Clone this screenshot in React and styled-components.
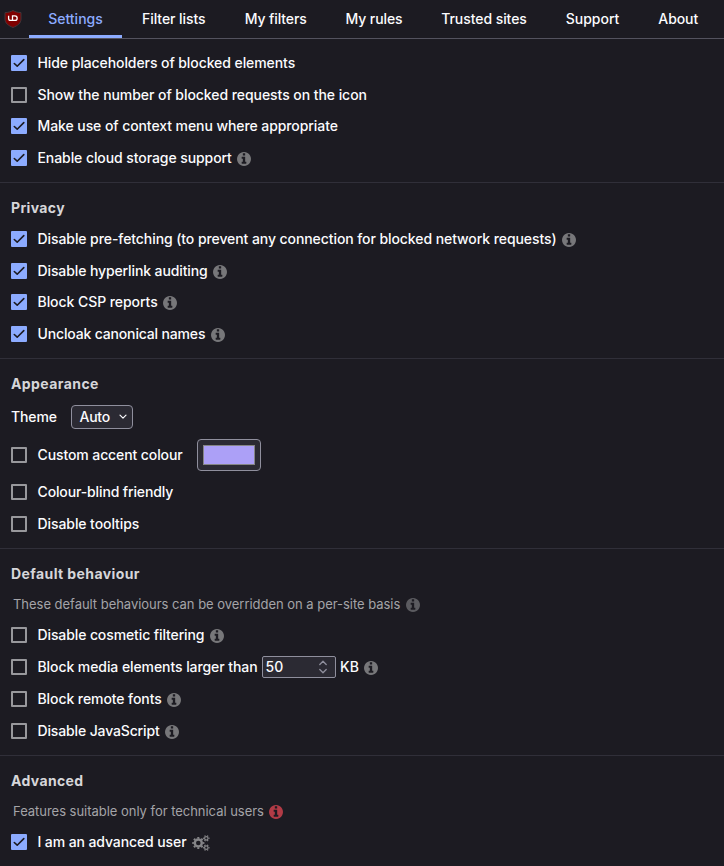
import React from "react";
import styled, { createGlobalStyle } from "styled-components";

const GlobalStyle = createGlobalStyle`
  * { box-sizing: border-box; }
  body {
    margin: 0;
    background: #1c1b22;
    color: #fbfbfe;
    font: 500 14px/20px Inter, "Liberation Sans", sans-serif;
    overflow: hidden;
  }
`;

const Page = styled.div`
  height: 866px;
  overflow: hidden;
`;

const Nav = styled.nav`
  display: flex;
  height: 39px;
  border-bottom: 1px solid #53525e;
`;

const Logo = styled.svg`
  width: 18px;
  height: 18px;
  margin: 10px 7px 0 4px;
  flex: none;
`;

const Tab = styled.a`
  width: ${(p) => p.$width}px;
  flex: none;
  text-align: center;
  line-height: 38px;
  height: 38px;
  letter-spacing: ${(p) => p.$spacing || 0}px;
  white-space: nowrap;
  color: ${(p) => (p.$active ? "#8cabff" : "#fbfbfe")};
  border-bottom: 3px solid ${(p) => (p.$active ? "#8cabff" : "transparent")};
`;

const Section = styled.section`
  padding: ${(p) => p.$top}px 11px 8.16px;
  border-bottom: 1px solid #302f39;
  &:last-child { border-bottom: 0; }
`;

const Heading = styled.h3`
  margin: 0;
  height: ${(p) => p.$height}px;
  font-size: 14px;
  font-weight: 700;
  line-height: 31px;
  letter-spacing: ${(p) => p.$spacing || 0.35}px;
  color: #d6d6d9;
`;

const Description = styled.p`
  display: flex;
  align-items: center;
  margin: 0;
  padding-left: 2px;
  height: ${(p) => p.$height}px;
  font-size: 13px;
  font-weight: 400;
  letter-spacing: -0.03px;
  color: #a4a4a8;
`;

const Row = styled.div`
  display: flex;
  align-items: center;
  height: ${(p) => p.$height || 31.67}px;
  white-space: nowrap;
`;

const Box = styled.span`
  display: flex;
  flex: none;
  width: 16px;
  height: 16px;
  margin-right: 10.5px;
  border-radius: 1px;
  border: ${(p) => (p.$checked ? "0" : "2px solid #98989c")};
  background: ${(p) => (p.$checked ? "#8cabff" : "transparent")};
`;

const Text = styled.span`
  letter-spacing: ${(p) => p.$spacing || 0}px;
`;

const InfoSvg = styled.svg`
  flex: none;
  width: 14px;
  height: 14px;
  margin: 2px 0 0 5.5px;
  fill: ${(p) => p.$tone || "#77777a"};
`;

const GearsSvg = styled.svg`
  flex: none;
  width: 18px;
  height: 16px;
  margin: 2px 0 0 5px;
  fill: none;
  stroke: #858588;
`;

const Select = styled.div`
  display: flex;
  align-items: center;
  justify-content: space-between;
  width: 62px;
  height: 24px;
  margin-left: 14.5px;
  padding: 0 5px 0 7px;
  letter-spacing: -0.25px;
  background: #2b2a33;
  border: 1px solid #8f8f9d;
  border-radius: 4px;
`;

const ColorWell = styled.div`
  width: 64px;
  height: 32px;
  margin-left: 14px;
  padding: 5px;
  background: #2b2a33;
  border: 1px solid #8f8f9d;
  border-radius: 4px;
`;

const Swatch = styled.div`
  height: 20px;
  background: #aca0f7;
  border: 1px solid #858585;
`;

const NumberField = styled.div`
  display: flex;
  align-items: center;
  justify-content: space-between;
  width: 74px;
  height: 22px;
  margin: 0 4.5px 0 4px;
  padding: 0 8px 0 3px;
  background: #2b2a33;
  border: 1px solid #8f8f9d;
  border-radius: 2px;
`;

function Info({ tone }) {
  return (
    <InfoSvg $tone={tone} viewBox="128 128 1536 1536">
      <path d="M1152 1376v-160q0-14-9-23t-23-9h-96V672q0-14-9-23t-23-9H672q-14 0-23 9t-9 23v160q0 14 9 23t23 9h96v320h-96q-14 0-23 9t-9 23v160q0 14 9 23t23 9h448q14 0 23-9t9-23zM1024 480V288q0-14-9-23t-23-9H800q-14 0-23 9t-9 23v192q0 14 9 23t23 9h192q14 0 23-9t9-23zM1664 896q0 209-103 385.500t-279.500 279.500-385.500 103-385.500-103-279.500-279.500-103-385.500 103-385.500 279.500-279.500 385.500-103 385.500 103 279.500 279.500 103 385.500z" />
    </InfoSvg>
  );
}

function Gears() {
  return (
    <GearsSvg viewBox="0 0 18 16">
      <circle cx="6.3" cy="8" r="3.5" strokeWidth="2.4" />
      <circle cx="6.3" cy="8" r="5.2" strokeWidth="1.800" pathLength="16" strokeDasharray="1 1" strokeDashoffset="0.5" />
      {[3.3, 12.7].map((cy) => (
        <g key={cy}>
          <circle cx="14.3" cy={cy} r="1.75" strokeWidth="1.2" />
          <circle cx="14.3" cy={cy} r="2.7" strokeWidth="1.1" pathLength="12" strokeDasharray="1 1" strokeDashoffset="0.5" />
        </g>
      ))}
    </GearsSvg>
  );
}

function Check({ label, checked, info, spacing = -0.08, height, children }) {
  return (
    <Row $height={height}>
      <Box $checked={checked}>
        {checked && (
          <svg width="16" height="16" viewBox="0 0 16 16" fill="none">
            <path d="M3.3 8.5 6.2 11.2 12.8 4.6" stroke="#1c1b22" strokeWidth="1.6" strokeLinecap="round" strokeLinejoin="round" />
          </svg>
        )}
      </Box>
      <Text $spacing={spacing}>{label}</Text>
      {children}
      {info && <Info />}
    </Row>
  );
}

export default function App() {
  return (
    <Page>
      <GlobalStyle />
      <Nav>
        <Logo viewBox="0 0 18 18">
          <path d="M9 .5C6.8 1.8 4 2.5 1 2.6V9c0 4.3 3.2 6.5 8 8.500 4.800-2 8-4.200 8-8.500V2.600C14 2.500 11.200 1.800 9 .5Z" fill="#800000" stroke="#42363b" strokeWidth="1" />
          <path d="M4.600 5.800v2.700c0 1.200.7 1.900 1.900 1.900h4.400a2.250 2.250 0 0 0 0-4.500H8.500v4.300" fill="none" stroke="#fff" strokeWidth="1.300" />
        </Logo>
        <Tab $active $width={93}>Settings</Tab>
        <Tab $width={103.5} $spacing={-0.08}>Filter lists</Tab>
        <Tab $width={100.5} $spacing={-0.12}>My filters</Tab>
        <Tab $width={96} $spacing={-0.1}>My rules</Tab>
        <Tab $width={124} $spacing={-0.06}>Trusted sites</Tab>
        <Tab $width={93}>Support</Tab>
        <Tab $width={78.5} $spacing={-0.08}>About</Tab>
      </Nav>

      <Section $top={8.17}>
        <Check checked label="Hide placeholders of blocked elements" />
        <Check spacing={-0.06} label="Show the number of blocked requests on the icon" />
        <Check checked label="Make use of context menu where appropriate" />
        <Check checked info label="Enable cloud storage support" />
      </Section>

      <Section $top={9.17}>
        <Heading $height={31}>Privacy</Heading>
        <Check checked info label="Disable pre-fetching (to prevent any connection for blocked network requests)" />
        <Check checked info spacing={-0.11} label="Disable hyperlink auditing" />
        <Check checked info spacing={-0.06} label="Block CSP reports" />
        <Check checked info spacing={-0.16} label="Uncloak canonical names" />
      </Section>

      <Section $top={9.17}>
        <Heading $height={32.83} $spacing={0.42}>Appearance</Heading>
        <Row $height={32}>
          <Text $spacing={-0.1}>Theme</Text>
          <Select>
            Auto
            <svg width="8" height="6" viewBox="0 0 8 6" fill="none">
              <path d="m1 1.2 3 3 3-3" stroke="#fbfbfe" strokeWidth="1.2" strokeLinecap="round" strokeLinejoin="round" />
            </svg>
          </Select>
        </Row>
        <Check height={43.6} spacing={-0.1} label="Custom accent colour">
          <ColorWell><Swatch /></ColorWell>
        </Check>
        <Check spacing={-0.13} label="Colour-blind friendly" />
        <Check label="Disable tooltips" />
      </Section>

      <Section $top={9.17}>
        <Heading $height={31} $spacing={0.41}>Default behaviour</Heading>
        <Description $height={29.83}>
          These default behaviours can be overridden on a per-site basis
          <Info tone="#5b5b60" />
        </Description>
        <Check height={32} info spacing={-0.11} label="Disable cosmetic filtering" />
        <Check height={32} info label="Block media elements larger than">
          <NumberField>
            50
            <svg width="8" height="14" viewBox="0 0 8 14" fill="none">
              <path d="m.8 4.5 3.2-3.2 3.2 3.2M.8 9.5 4 12.7l3.2-3.2" stroke="#8f8f9d" strokeWidth="1.3" strokeLinecap="round" strokeLinejoin="round" />
            </svg>
          </NumberField>
          <Text>KB</Text>
        </Check>
        <Check height={32} info label="Block remote fonts" />
        <Check height={32} info spacing={-0.14} label="Disable JavaScript" />
      </Section>

      <Section $top={9.17}>
        <Heading $height={31}>Advanced</Heading>
        <Description $height={29.4}>
          Features suitable only for technical users
          <Info tone="#b13b46" />
        </Description>
        <Check height={32} checked spacing={-0.1} label="I am an advanced user">
          <Gears />
        </Check>
      </Section>
    </Page>
  );
}
